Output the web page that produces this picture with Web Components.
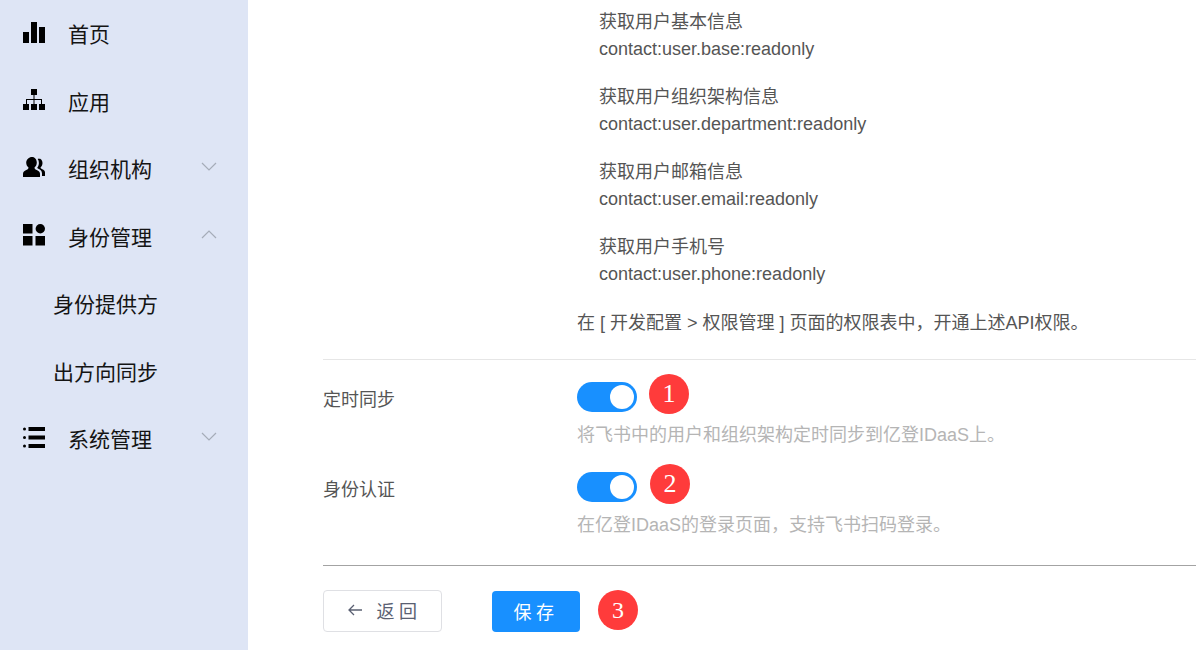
<!DOCTYPE html>
<html lang="zh">
<head>
<meta charset="utf-8">
<title>身份管理</title>
<style>
  html, body { margin: 0; height: 650px; overflow: hidden; background: #fff; }
  body { display: flex; font-family: "Liberation Sans", "Noto Sans CJK SC", sans-serif; }
</style>
</head>
<body>
<side-nav>
  <nav-item label="首页" icon="chart"></nav-item>
  <nav-item label="应用" icon="tree"></nav-item>
  <nav-item label="组织机构" icon="users" arrow="down"></nav-item>
  <nav-item label="身份管理" icon="grid" arrow="up"></nav-item>
  <nav-item label="身份提供方" sub></nav-item>
  <nav-item label="出方向同步" sub></nav-item>
  <nav-item label="系统管理" icon="list" arrow="down"></nav-item>
</side-nav>
<main-panel>
  <perm-item title="获取用户基本信息" code="contact:user.base:readonly"></perm-item>
  <perm-item title="获取用户组织架构信息" code="contact:user.department:readonly"></perm-item>
  <perm-item title="获取用户邮箱信息" code="contact:user.email:readonly"></perm-item>
  <perm-item title="获取用户手机号" code="contact:user.phone:readonly"></perm-item>
  <p slot="note">在 [ 开发配置 &gt; 权限管理 ] 页面的权限表中，开通上述API权限。</p>
  <switch-row slot="switches" label="定时同步" hint="将飞书中的用户和组织架构定时同步到亿登IDaaS上。" num="1" offset="12"></switch-row>
  <switch-row slot="switches" label="身份认证" hint="在亿登IDaaS的登录页面，支持飞书扫码登录。" num="2" offset="13"></switch-row>
  <form-actions slot="actions"></form-actions>
</main-panel>

<script>
const ICONS = {
  chart: `<path d="M0 10h6v11H0zM8 0h6v21H8zM16 5h6v16h-6z"/>`,
  tree: `<path d="M8 0h6v6H8zM0 15h6v6H0zM8 15h6v6H8zM16 15h6v6h-6z"/><path d="M10.500 6h1v4H19v5h-1v-4h-6.500v4h-1v-4H4v4H3v-5h7.500z"/>`,
  users: `<path d="M9 0c3 0 4.800 2.500 4.800 5.500 0 2.200-.9 4-2.300 5 0 1.200.6 1.700 2.200 2.400 1.900.8 3.300 1.700 3.300 3.800V20H0v-3.300c0-2.100 1.400-3 3.300-3.800 1.600-.7 2.200-1.200 2.200-2.400-1.400-1-2.300-2.800-2.300-5C3.200 2.500 6 0 9 0z"/><path d="M15.500 1.500c2.500 0 4 2.100 4 4.500 0 1.800-.7 3.300-1.900 4.200 0 1 .5 1.400 1.700 2 1.500.7 2.700 1.500 2.700 3.300V19h-3v-2.500c0-2.500-1.600-3.700-3.700-4.700-.6-.3-1-.6-1.100-1 1.100-1.300 1.700-3 1.700-4.800 0-1.500-.4-2.900-1.200-4 .4-.2.800-.5 1.800-.5z"/>`,
  grid: `<path d="M0 0h9.500v9.500H0zM0 12h9.500v9.500H0zM12.500 12H22v9.500h-9.500z"/><circle cx="17.300" cy="4.700" r="4.700"/>`,
  list: `<path d="M5.500 0H22v4H5.500zM5.500 8.500H22v4H5.500zM5.500 17H22v4H5.500z"/><circle cx="1.500" cy="2" r="1.500"/><circle cx="1.500" cy="10.500" r="1.500"/><circle cx="1.500" cy="19" r="1.500"/>`
};

// barra lateral
class SideNav extends HTMLElement {
  constructor() {
    super();
    this.attachShadow({ mode: "open" });
    this.shadowRoot.innerHTML = `
      <style>
        :host { display: flex; flex-direction: column; flex: none; width: 248px; height: 650px; background: #dee5f5; padding-top: 1px; box-sizing: border-box; }
      </style>
      <slot></slot>`;
  }
}
customElements.define("side-nav", SideNav);

class NavItem extends HTMLElement {
  constructor() {
    super();
    this.attachShadow({ mode: "open" });
  }
  connectedCallback() {
    const icon = this.getAttribute("icon");
    const arrow = this.getAttribute("arrow");
    const sub = this.hasAttribute("sub");
    this.shadowRoot.innerHTML = `
      <style>
        :host { display: block; height: 67.500px; }
        .row { display: flex; align-items: center; height: 67px; padding-left: ${sub ? 53 : 23}px; color: #141414; font-size: 21px; }
        .ic { width: 22px; height: 22px; margin-right: 23px; margin-top: -4px; fill: #000; flex: none; }
        .label { flex: 1; margin-top: -3px; }
        .arrow { width: 16px; height: 9px; margin-right: 31px; margin-top: -6px; fill: none; stroke: #a5acb8; stroke-width: 1.200; flex: none; }
      </style>
      <div class="row">
        ${icon ? `<svg class="ic" viewBox="0 0 22 22">${ICONS[icon]}</svg>` : ""}
        <span class="label">${this.getAttribute("label")}</span>
        ${arrow ? `<svg class="arrow" viewBox="0 0 16 9"><path d="${arrow === "down" ? "M1 1l7 7 7-7" : "M1 8l7-7 7 7"}"/></svg>` : ""}
      </div>`;
  }
}
customElements.define("nav-item", NavItem);

// panel principal
class MainPanel extends HTMLElement {
  constructor() {
    super();
    this.attachShadow({ mode: "open" });
    this.shadowRoot.innerHTML = `
      <style>
        :host { display: block; flex: 1; min-width: 0; padding: 9px 0 0 75px; color: #555; }
        .perms { padding-left: 276px; }
        .note { padding-left: 254px; height: 49px; border-bottom: 1px solid #e6e6e6; margin-top: 1px; }
        ::slotted(p) { margin: 0; font-size: 18px; line-height: 27px; color: #555; }
        .switches { height: 206px; border-bottom: 1px solid #a3a3a3; padding-top: 22px; box-sizing: border-box; }
      </style>
      <div class="perms"><slot></slot></div>
      <div class="note"><slot name="note"></slot></div>
      <div class="switches"><slot name="switches"></slot></div>
      <slot name="actions"></slot>`;
  }
}
customElements.define("main-panel", MainPanel);

class PermItem extends HTMLElement {
  constructor() {
    super();
    this.attachShadow({ mode: "open" });
  }
  connectedCallback() {
    this.shadowRoot.innerHTML = `
      <style>
        :host { display: block; font-size: 18px; line-height: 27px; height: 75px; color: #555; }
      </style>
      <div>${this.getAttribute("title")}</div>
      <div>${this.getAttribute("code")}</div>`;
  }
}
customElements.define("perm-item", PermItem);

class NumBadge extends HTMLElement {
  constructor() {
    super();
    this.attachShadow({ mode: "open" });
    this.shadowRoot.innerHTML = `
      <style>
        :host { display: flex; align-items: center; justify-content: center; width: 40px; height: 40px; border-radius: 50%; background: #ff3b3b; color: #fff; font: 26px "Liberation Serif", serif; flex: none; }
      </style>
      <slot></slot>`;
  }
}
customElements.define("num-badge", NumBadge);

class SwitchRow extends HTMLElement {
  constructor() {
    super();
    this.attachShadow({ mode: "open" });
  }
  connectedCallback() {
    this.shadowRoot.innerHTML = `
      <style>
        :host { display: flex; height: 90px; font-size: 18px; }
        .label { width: 254px; flex: none; color: #555; line-height: 36px; }
        .ctl { display: flex; align-items: center; height: 30px; }
        .toggle { width: 60px; height: 30px; border-radius: 15px; background: #1890ff; position: relative; flex: none; }
        .toggle::after { content: ""; position: absolute; right: 3.500px; top: 3px; width: 24px; height: 24px; border-radius: 50%; background: #fff; }
        num-badge { margin-left: ${this.getAttribute("offset")}px; margin-top: -6px; }
        .hint { color: #b5b5b5; line-height: 27px; margin-top: 10px; }
      </style>
      <div class="label">${this.getAttribute("label")}</div>
      <div>
        <div class="ctl"><span class="toggle"></span><num-badge>${this.getAttribute("num")}</num-badge></div>
        <div class="hint">${this.getAttribute("hint")}</div>
      </div>`;
  }
}
customElements.define("switch-row", SwitchRow);

class FormActions extends HTMLElement {
  constructor() {
    super();
    this.attachShadow({ mode: "open" });
    this.shadowRoot.innerHTML = `
      <style>
        :host { display: flex; align-items: center; height: 42px; margin-top: 24px; font-size: 18px; }
        button { font: inherit; box-sizing: border-box; border-radius: 4px; letter-spacing: 4.500px; display: flex; align-items: center; justify-content: center; padding: 0 0 2px; }
        .back { width: 119px; height: 42px; background: #fff; border: 1px solid #dfe0e4; color: #5a6072; }
        .back svg { width: 14px; height: 12px; margin-right: 15px; margin-left: 4px; fill: none; stroke: #5a6072; stroke-width: 1.300; }
        .save { width: 88px; height: 41px; margin-left: 50px; margin-top: 1px; background: #1890ff; border: 0; color: #fff; }
        num-badge { margin-left: 18px; margin-top: -2px; font-size: 24px; }
      </style>
      <button class="back"><svg viewBox="0 0 14 12"><path d="M14 6H1.500M6 1L1 6l5 5"/></svg>返回</button>
      <button class="save">保存</button>
      <num-badge>3</num-badge>`;
  }
}
customElements.define("form-actions", FormActions);
</script>
</body>
</html>
